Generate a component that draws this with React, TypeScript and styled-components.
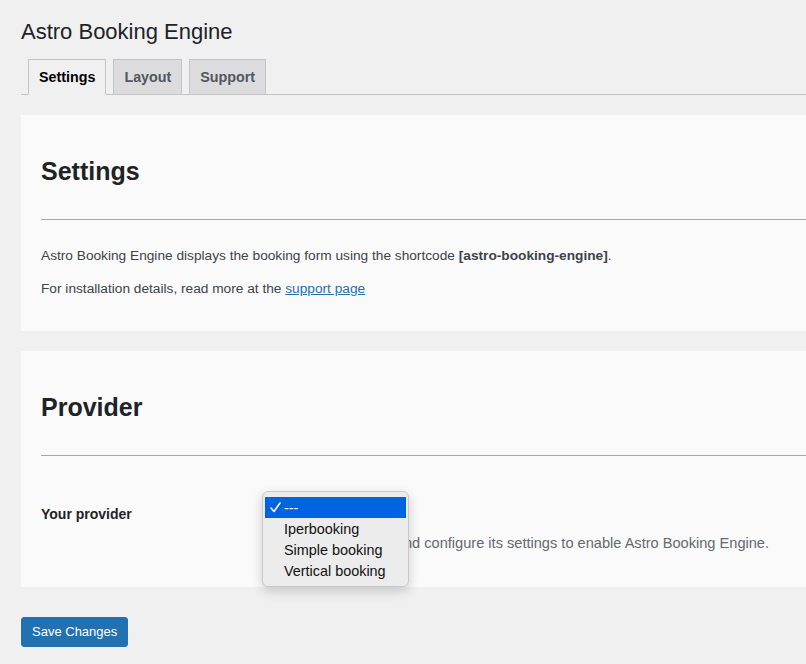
import styled, { createGlobalStyle } from 'styled-components'

const GlobalStyle = createGlobalStyle`
  html,
  body {
    margin: 0;
    padding: 0;
    overflow-x: hidden;
    background: #f0f0f1;
    font-family: 'Liberation Sans', Arial, sans-serif;
    color: #3c434a;
  }

  * {
    box-sizing: border-box;
  }
`

const Wrap = styled.div`
  padding: 8px 0 40px 21px;
  width: 1000px;
`

const Title = styled.h1`
  margin: 0;
  padding: 9px 0 4px;
  font-size: 22px;
  font-weight: 400;
  line-height: 30px;
  color: #1d2327;
`

const TabBar = styled.nav`
  display: flex;
  align-items: flex-end;
  gap: 7px;
  margin-top: 8px;
  padding-left: 7px;
  border-bottom: 1px solid #c3c4c7;
`

const Tab = styled.a<{ $active?: boolean }>`
  display: block;
  margin-bottom: -1px;
  padding: 5px 10px;
  border: 1px solid #c3c4c7;
  border-bottom-color: ${(p) => (p.$active ? '#f0f0f1' : '#c3c4c7')};
  background: ${(p) => (p.$active ? '#f0f0f1' : '#dcdcde')};
  color: ${(p) => (p.$active ? '#000' : '#50575e')};
  font-size: 14.3px;
  font-weight: 600;
  line-height: 24px;
  text-decoration: none;
`

const Card = styled.section`
  margin-top: 20px;
  padding: 20px 20px 19px;
  background: #fafafa;
`

const Heading = styled.h2`
  margin: 20px 0 0;
  font-size: 25px;
  font-weight: 700;
  line-height: 32px;
  color: #1d2327;
`

const Rule = styled.hr`
  margin: 32px 0 0;
  border: 0;
  border-top: 1px solid #a7aaad;
`

const Text = styled.p<{ $first?: boolean }>`
  margin: ${(p) => (p.$first ? '26px' : '13px')} 0 13px;
  font-size: 13.7px;
  line-height: 20px;
  color: #3c434a;

  strong {
    font-weight: 600;
    color: #3c434a;
  }

  a {
    color: #2271b1;
  }
`

const FormRow = styled.div`
  display: grid;
  grid-template-columns: 221px 1fr;
  margin-top: 43px;
  padding-bottom: 15px;
`

const Label = styled.label`
  padding-top: 5px;
  font-size: 14px;
  font-weight: 600;
  line-height: 20px;
  color: #1d2327;
`

const Field = styled.div`
  position: relative;
`

const Select = styled.div`
  width: 147px;
  height: 30px;
  border: 1px solid #8c8f94;
  border-radius: 4px;
  background: #fff;
`

const Description = styled.p`
  margin: 4px 0 0;
  font-size: 14.6px;
  line-height: 20px;
  color: #646970;
`

const Popup = styled.ul`
  position: absolute;
  top: -8px;
  left: 0;
  width: 147px;
  margin: 0;
  padding: 5px 2px;
  list-style: none;
  background: #ececec;
  border: 1px solid #c9c9c9;
  border-radius: 6px;
  box-shadow: 0 4px 12px rgba(0, 0, 0, 0.18);
`

const Option = styled.li<{ $selected?: boolean }>`
  display: flex;
  align-items: center;
  height: 21px;
  padding-left: 19px;
  position: relative;
  background: ${(p) => (p.$selected ? '#0063e1' : 'transparent')};
  color: ${(p) => (p.$selected ? '#fff' : '#111')};
  font-size: 14.4px;
  white-space: nowrap;

  svg {
    position: absolute;
    left: 5px;
    top: 5px;
  }
`

const SaveButton = styled.button`
  margin-top: 30px;
  height: 30px;
  padding: 0 10px;
  border: 1px solid #2271b1;
  border-radius: 3px;
  background: #2271b1;
  color: #fff;
  font-family: inherit;
  font-size: 13px;
  line-height: 28px;
`

const Check = () => (
  <svg width="11" height="11" viewBox="0 0 11 11" fill="none">
    <path d="M1 6l3 3.5L10 1" stroke="#fff" strokeWidth="1.6" strokeLinecap="round" strokeLinejoin="round" />
  </svg>
)

const options = ['---', 'Iperbooking', 'Simple booking', 'Vertical booking']

export const App = (): JSX.Element => {
  return (
    <Wrap>
      <GlobalStyle />
      <Title>Astro Booking Engine</Title>
      <TabBar>
        <Tab $active>Settings</Tab>
        <Tab>Layout</Tab>
        <Tab>Support</Tab>
      </TabBar>

      <Card>
        <Heading>Settings</Heading>
        <Rule />
        <Text $first>
          Astro Booking Engine displays the booking form using the shortcode{' '}
          <strong>[astro-booking-engine]</strong>.
        </Text>
        <Text>
          For installation details, read more at the <a href="#">support page</a>
        </Text>
      </Card>

      <Card>
        <Heading>Provider</Heading>
        <Rule />
        <FormRow>
          <Label>Your provider</Label>
          <Field>
            <Select />
            <Description>
              Select your provider and configure its settings to enable Astro Booking Engine.
            </Description>
            <Popup>
              {options.map((o, i) => (
                <Option key={o} $selected={i === 0}>
                  {i === 0 && <Check />}
                  {o}
                </Option>
              ))}
            </Popup>
          </Field>
        </FormRow>
      </Card>

      <SaveButton>Save Changes</SaveButton>
    </Wrap>
  )
}

export default App
